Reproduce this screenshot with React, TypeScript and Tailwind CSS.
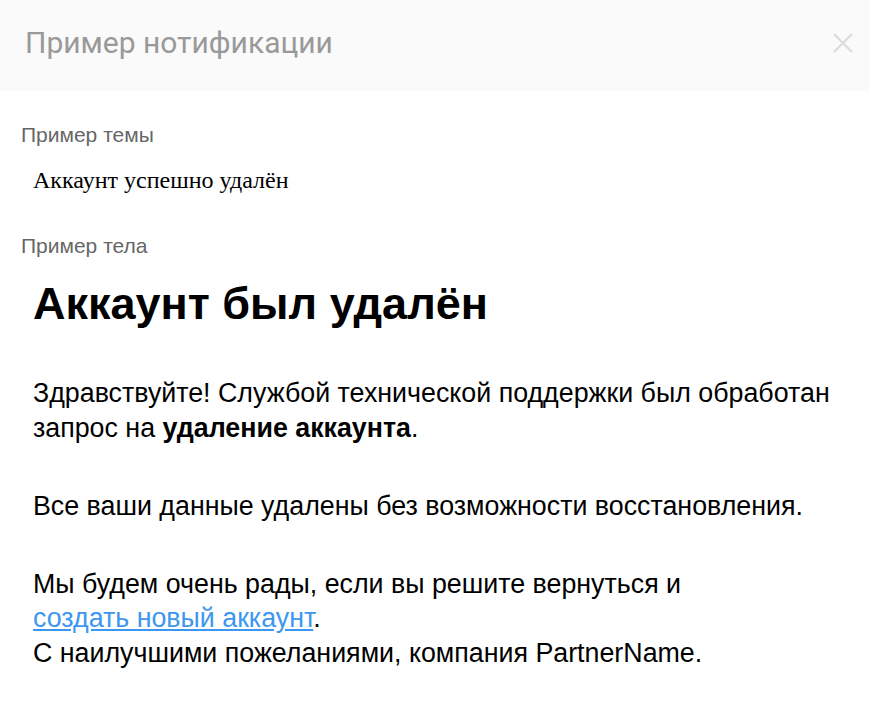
import React from "react";

export default function App() {
  return (
    <div className="w-[870px] h-[708px] bg-white overflow-hidden font-['Liberation_Sans',Arial,sans-serif]">
      {/* Header */}
      <div className="h-[91px] bg-[#fafafa] flex items-center justify-between pl-[25px] pr-[17px]">
        <h2 className="text-[30px] text-[#999999] font-['Roboto',sans-serif] font-normal leading-none mb-[6px]">
          Пример нотификации
        </h2>
        <button className="w-[20px] h-[20px] mb-[6px]" aria-label="close">
          <svg viewBox="0 0 20 20" className="w-[20px] h-[20px]">
            <path d="M1 1L19 19M19 1L1 19" stroke="#dcdcdc" strokeWidth="2.4" />
          </svg>
        </button>
      </div>

      {/* Body */}
      <div className="pl-[21px] pr-[14px] pt-[33px]">
        <div className="text-[21px] text-[#666666] leading-none">Пример темы</div>
        <div className="pl-[12px] mt-[23px] text-[24px] text-black font-['Liberation_Serif',serif] leading-none">
          Аккаунт успешно удалён
        </div>

        <div className="text-[21px] text-[#666666] leading-none mt-[43px]">Пример тела</div>
        <div className="pl-[12px] text-black">
          <h1 className="text-[45px] font-bold leading-none mt-[25px]">Аккаунт был удалён</h1>
          <p className="text-[26.8px] leading-[34.5px] mt-[50px]">
            Здравствуйте! Службой технической поддержки был обработан запрос на <b>удаление аккаунта</b>.
          </p>
          <p className="text-[26.8px] leading-[34.5px] mt-[44px]">
            Все ваши данные удалены без возможности восстановления.
          </p>
          <p className="text-[26.8px] leading-[34.5px] mt-[43px]">
            Мы будем очень рады, если вы решите вернуться и
            <br />
            <a href="#" className="text-[#3d97f0] underline">создать новый аккаунт</a>.
            <br />
            С наилучшими пожеланиями, компания PartnerName.
          </p>
        </div>
      </div>
    </div>
  );
}
